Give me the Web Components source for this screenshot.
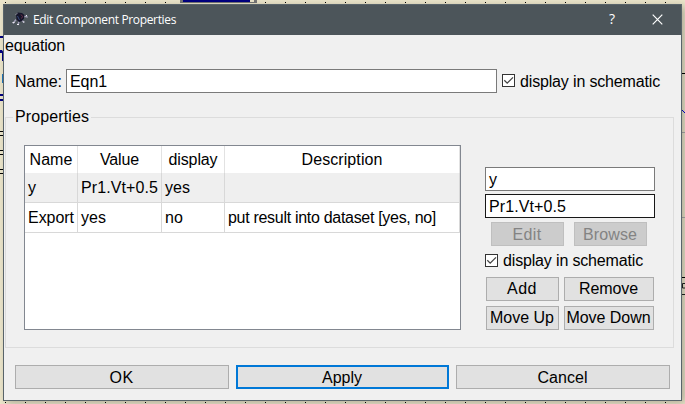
<!DOCTYPE html>
<html lang="en"><head><meta charset="utf-8"><title>Edit Component Properties</title>
<style>
html,body{margin:0;width:685px;height:404px;overflow:hidden}
body{font:16px/18px "Liberation Sans",Arial,sans-serif;color:#000;background:#e6e0c6}
</style></head><body>
<schematic-desk><edit-dialog></edit-dialog></schematic-desk>
<script>
const define=(name,html,init)=>customElements.define(name,class extends HTMLElement{
  constructor(){super();this.attachShadow({mode:'open'});}
  connectedCallback(){this.shadowRoot.innerHTML=html;if(init)init.call(this,this.shadowRoot);}
});
/* Text run with an optional advance width, reached through letter spacing */
define('fit-text','<style>:host{display:inline-block;white-space:pre}span{display:inline-block}</style><span><slot></slot></span>',function(r){
  const w=+this.getAttribute('w'),s=r.querySelector('span');
  if(w){const n=this.textContent.length,m=s.getBoundingClientRect().width;if(m)s.style.letterSpacing=((w-m)/n)+'px';}
});
define('line-input','<style>:host{display:block;box-sizing:border-box;height:24px;border:1px solid #7a7a7a;background:#fff;padding:3px 0 0 3px;line-height:18px}:host([active]){border-color:#171717}</style><slot></slot>');
define('push-button','<style>:host{display:flex;box-sizing:border-box;height:24px;border:1px solid #adadad;background:#e1e1e1;justify-content:center;align-items:flex-start;padding:3px 1px 0 0}:host([disabled]){background:#ccc;border-color:#bfbfbf;color:#838383}:host([primary]){border:2px solid #0078d7;padding-top:2px}:host([raised]){padding-top:2px}</style><slot></slot>');
define('check-box','<style>:host{display:flex;gap:5px;height:18px}svg{display:block;margin-top:2px;flex:none}</style><svg width="13" height="13" viewBox="0 0 13 13"><rect x=".5" y=".5" width="12" height="12" fill="#fff" stroke="#333"/><path d="M2.3 6.3L5.2 9.2L11 3.4" fill="none" stroke="#444" stroke-width="1.3"/></svg><slot></slot>');
define('title-bar',`<style>:host{display:flex;height:30px;background:#4c555a;color:#fff;font:12px/30px "Open Sans","Noto Sans",sans-serif}
.logo{margin:6px 0 0 8px;width:17px;height:17px}.t{margin-left:4px;flex:1}.q{font-size:14px;width:10px;text-align:center;margin:-1px 35px 0 0}.x{margin:9px 18px 0 0;width:11px;height:11px}</style>
<svg class="logo" viewBox="0 0 17 17"><path d="M4 8.5L1 12.5M12 5.5H14.5L15.5 6.5M7 10.5L6 14M10 9.5L12 11.5" stroke="#a3a1b8" stroke-width="1.4" fill="none"/><path d="M4 3L6 1.5L10 2L12.5 4L12 7.5L10 10L7 11L4.5 8.5Z" fill="#15152a"/><path d="M9 3.5L10.5 5.5L9.5 7.5" stroke="#6b3048" fill="none"/><path d="M5.5 5L7.5 9" stroke="#354a78" fill="none"/><path d="M0.5 11.5h2M4 3.5l1-1M5 13.5h2M11 11h1.500M14 4.500h1" stroke="#eceaf2" fill="none"/></svg>
<span class="t"><fit-text w="143">Edit Component Properties</fit-text></span><span class="q">?</span>
<svg class="x" viewBox="0 0 11 11"><path d="M.7.7L10.3 10.3M10.3.7L.7 10.3" stroke="#fff" stroke-width="1.2"/></svg>`);
define('property-table',`<style>:host{display:block;box-sizing:border-box;width:437px;height:185px;border:1px solid #828790;background:#fff}
.r{display:grid;grid-template-columns:53px 84px 63px 235px;height:30px}.r>div{box-sizing:border-box;border:solid #d8d8d8;border-width:0 1px 1px 0;padding:6px 0 0 3px}
.h{height:27px}.h>div{border-color:#e2e2e2;border-bottom:0;text-align:center;padding:5px 0 0}.s>div{background:#efefef}</style>
<div class="r h"><div><fit-text w="43">Name</fit-text></div><div><fit-text w="39">Value</fit-text></div><div><fit-text w="49">display</fit-text></div><div><fit-text w="81">Description</fit-text></div></div>
<div class="r s"><div>y</div><div><fit-text w="77">Pr1.Vt+0.5</fit-text></div><div>yes</div><div></div></div>
<div class="r"><div><fit-text w="46">Export</fit-text></div><div>yes</div><div>no</div><div><fit-text w="208">put result into dataset [yes, no]</fit-text></div></div>`);
define('property-editor',`<style>:host{display:block;width:170px}line-input+line-input{margin-top:3px}.e,.b{display:grid}.e{grid-template-columns:73px 73px;column-gap:10px;margin:4px 0 0 6px}check-box{margin:6px 0 7px}.b{grid-template-columns:73px 90px;gap:5px;margin-left:1px}</style>
<line-input>y</line-input><line-input active><fit-text w="77">Pr1.Vt+0.5</fit-text></line-input>
<div class="e"><push-button disabled><fit-text w="29">Edit</fit-text></push-button><push-button disabled><fit-text w="54">Browse</fit-text></push-button></div>
<check-box><fit-text w="140">display in schematic</fit-text></check-box>
<div class="b"><push-button raised><fit-text w="30">Add</fit-text></push-button><push-button raised><fit-text w="59">Remove</fit-text></push-button><push-button raised><fit-text w="64">Move Up</fit-text></push-button><push-button raised><fit-text w="84">Move Down</fit-text></push-button></div>`);
define('group-box',`<style>:host{display:block}fieldset{display:flex;box-sizing:border-box;width:669px;height:240px;margin:0;padding:19px 0 0 18px;border:1px solid #dcdcdc;min-width:0}legend{margin-left:-11px;padding:0 2px;height:18px}</style><fieldset><legend><slot name="label"></slot></legend><slot></slot></fieldset>`);
define('edit-dialog',`<style>:host{display:block;box-sizing:border-box;width:679px;height:397px;border:1px solid #59646a;background:#f0f0f0;box-shadow:3px 2px 8px 0 #0004}
.k{margin-left:1px;height:18px;padding-top:2px}.n{display:flex;margin-top:14px;padding-left:11px}.n .l{width:51px;padding-top:4px}.n line-input{width:431px;margin-right:5px}.n check-box{margin-top:3px}
.n check-box fit-text{margin-top:1px}
group-box{margin:15px 0 0 1px}property-editor{margin:22px 0 0 24px}.f{display:grid;grid-template-columns:214px 213px 214px;column-gap:7px;margin:17px 0 0 11px}</style>
<title-bar></title-bar><div class="k"><fit-text w="60">equation</fit-text></div>
<div class="n"><span class="l"><fit-text w="47">Name:</fit-text></span><line-input><fit-text w="37">Eqn1</fit-text></line-input><check-box><fit-text w="140">display in schematic</fit-text></check-box></div>
<group-box><fit-text slot="label" w="74">Properties</fit-text><property-table></property-table><property-editor></property-editor></group-box>
<div class="f"><push-button><fit-text w="24">OK</fit-text></push-button><push-button primary><fit-text w="40">Apply</fit-text></push-button><push-button><fit-text w="50">Cancel</fit-text></push-button></div>`);
define('schematic-desk',`<style>:host{display:block;position:relative;width:685px;height:404px;overflow:hidden;background:#ece6cb}svg{position:absolute;inset:0}.w{position:relative;padding:4px 0 0 3px}</style>
<svg width="685" height="404"><path d="M5 2.5H685M5 402.5H685" stroke="#000" stroke-dasharray="1 19"/>
<path d="M180 0H257V3H180Z" fill="#777"/><path d="M183 0H250V2H183Z" fill="#000080"/><path d="M250 0h4v2h-4z" fill="#ece6cb"/>
<path d="M0 37H4M0 95H4M0 100H4" stroke="#000080" stroke-width="2"/><path d="M0 50h2l2 3v8H2v-8H0z" fill="#000080"/><path d="M2 74h2v9H2z" fill="#2277bb"/>
<path d="M0 131.5H4M0 135.5H4M0 150.5H4M0 154.5H4M0 169.5H4M0 173.5H4" stroke="#000"/>
<path d="M681 73.5H685M681 277.5H685" stroke="#000"/><path d="M681 132.5H685M681 217.5H685" stroke="#aaa"/><path d="M682 110L685 113" stroke="#00d"/><path d="M685 283.5H682.5V288H685M682 294.5H685" fill="none" stroke="#222"/></svg><div class="w"><slot></slot></div>`);
</script></body></html>
